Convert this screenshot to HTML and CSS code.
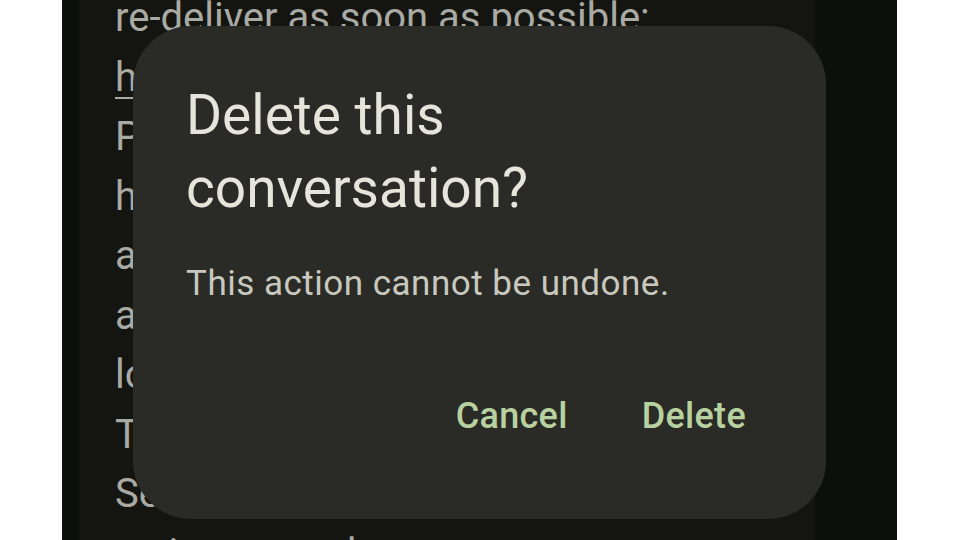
FILE: index.html
```html
<!DOCTYPE html>
<html lang="en">
<head>
<meta charset="utf-8">
<title>Delete conversation</title>
<link rel="stylesheet" href="styles.css">
</head>
<body>
<div class="phone">
  <div class="bubble">
    <div class="msg">
      <div class="line">re-deliver as soon as possible:</div>
      <div class="line link">https://usps.posthx.com/track</div>
      <div class="line">Please reply with Y, then exit the</div>
      <div class="line">hold the link open again, or copy</div>
      <div class="line">and paste it into your browser</div>
      <div class="line">address bar and open it to verify</div>
      <div class="line">location details.</div>
      <div class="line">The USPS team wishes you a</div>
      <div class="line">Service team wishes a nice week</div>
      <div class="line">so is our random</div>
    </div>
  </div>
  <div class="dialog" role="dialog">
    <h1 class="title">Delete this conversation?</h1>
    <p class="body-text">This action cannot be undone.</p>
    <div class="actions">
      <button class="btn">Cancel</button>
      <button class="btn">Delete</button>
    </div>
  </div>
</div>
</body>
</html>
```

FILE: styles.css
```css
html, body {
  margin: 0;
  padding: 0;
  background: #ffffff;
}

body {
  width: 959px;
  height: 540px;
  overflow: hidden;
}

.phone {
  position: relative;
  margin-left: 62px;
  width: 835px;
  height: 540px;
  background: #0d0f0a;
  overflow: hidden;
}

.bubble {
  margin-left: 17px;
  width: 736px;
  height: 540px;
  background: #141511;
  padding-left: 36px;
  box-sizing: border-box;
  overflow: hidden;
}

.msg {
  margin-top: -12px;
  font-family: Roboto, "Liberation Sans", sans-serif;
  font-size: 40px;
  line-height: 59.5px;
  color: #a9aaa3;
  white-space: nowrap;
}

.link {
  text-decoration: underline;
  text-underline-offset: 6px;
  text-decoration-thickness: 2px;
}

.dialog {
  position: absolute;
  left: 71px;
  top: 26px;
  width: 693px;
  height: 493px;
  box-sizing: border-box;
  background: #2a2b26;
  border-radius: 58px;
  padding: 53px 56px 0 53px;
  display: flex;
  flex-direction: column;
  font-family: Roboto, "Liberation Sans", sans-serif;
}

.title {
  margin: 0;
  font-size: 55px;
  font-weight: 400;
  line-height: 73px;
  color: #e6e5dc;
  width: 420px;
}

.body-text {
  margin: 37px 0 0;
  font-size: 35px;
  letter-spacing: 0.5px;
  line-height: 44px;
  color: #c9c8be;
}

.actions {
  margin-top: 90px;
  display: flex;
  justify-content: flex-end;
  gap: 26px;
}

.btn {
  background: none;
  border: 0;
  padding: 0 24px;
  font-family: Roboto, "Liberation Sans", sans-serif;
  font-size: 36px;
  font-weight: 500;
  letter-spacing: 0.3px;
  line-height: 40px;
  color: #b8d1a0;
}
```
